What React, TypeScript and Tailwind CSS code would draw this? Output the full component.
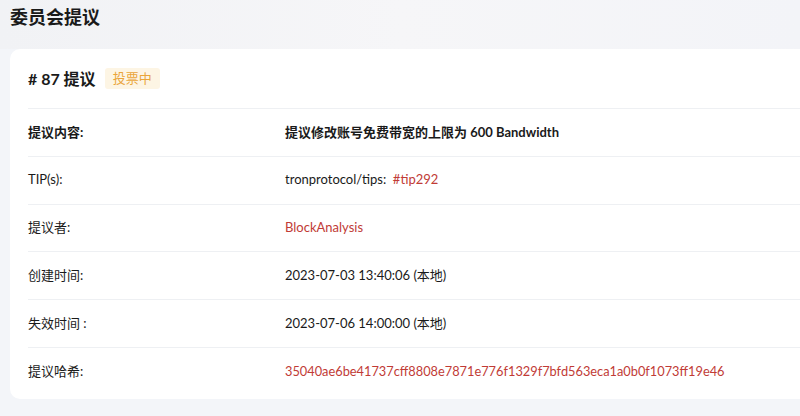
import React from 'react';

const red = 'text-[#c13b36]';

const rows: { label: string; value: React.ReactNode; bold?: boolean }[] = [
    { label: '提议内容:', value: '提议修改账号免费带宽的上限为 600 Bandwidth', bold: true },
    {
        label: 'TIP(s):',
        value: (
            <>
                tronprotocol/tips:&nbsp;&nbsp;<span className={red}>#tip292</span>
            </>
        ),
    },
    { label: '提议者:', value: <span className={red}>BlockAnalysis</span> },
    { label: '创建时间:', value: '2023-07-03 13:40:06 (本地)' },
    { label: '失效时间 :', value: '2023-07-06 14:00:00 (本地)' },
    {
        label: '提议哈希:',
        value: (
            <span className={`${red} text-[12.8px]`}>
                35040ae6be41737cff8808e7871e776f1329f7bfd563eca1a0b0f1073ff19e46
            </span>
        ),
    },
];

const App = () => {
    return (
        <div
            className="w-[800px] h-[416px] overflow-hidden bg-[#f3f5f9] text-[#1a1a1a]"
            style={{ fontFamily: 'Lato, "Noto Sans CJK SC", sans-serif' }}
        >
            {/* Page title */}
            <div className="h-[49px] pl-[10px] pt-[5px] bg-gradient-to-r from-[#f1f2f5] via-[#f6f6f8] to-[#f3f4f8]">
                <h1 className="text-[18px] font-bold leading-[24px]">委员会提议</h1>
            </div>

            {/* Proposal card */}
            <div className="ml-[10px] mr-[-20px] bg-white rounded-[10px] pl-[18px] pb-[4px]">
                <div className="h-[59px] flex items-center gap-[9px]">
                    <span className="text-[16px] font-bold">#&nbsp;87 提议</span>
                    <span className="h-[21px] px-[8px] flex items-center bg-[#fdf5e4] text-[#eaa53a] text-[13px] rounded-[3px]">
                        投票中
                    </span>
                </div>

                {rows.map((row) => (
                    <div
                        key={row.label}
                        className="flex items-center h-[47.8px] border-t border-[#eef0f3] text-[13px]"
                    >
                        <div className={`w-[257px] ${row.bold ? 'font-bold' : ''}`}>{row.label}</div>
                        <div className={row.bold ? 'font-bold' : ''}>{row.value}</div>
                    </div>
                ))}
            </div>
        </div>
    );
};

export default App;
